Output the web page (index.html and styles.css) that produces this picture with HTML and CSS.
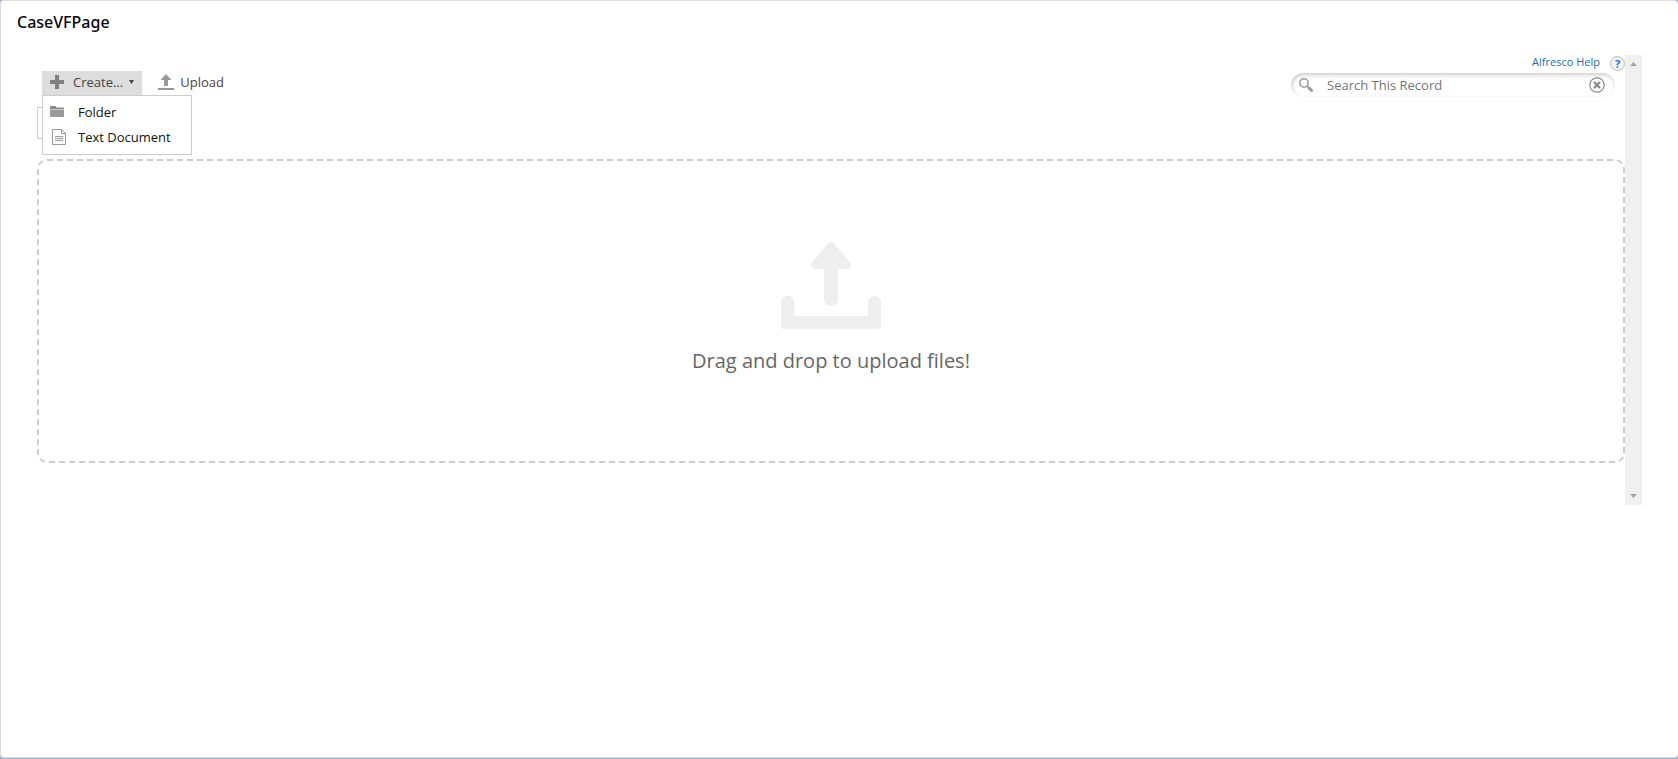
FILE: index.html
```html
<!DOCTYPE html>
<html lang="en">
<head>
<meta charset="utf-8">
<title>CaseVFPage</title>
<link rel="stylesheet" href="styles.css">
</head>
<body>
<article class="card">
  <h1 class="card-title">CaseVFPage</h1>
  <div class="frame">
    <main class="content">
      <header class="toolbar">
        <div class="actions">
          <div class="create">
            <button class="action action-open" type="button" aria-expanded="true">
              <svg width="14" height="14" viewBox="0 0 14 14" aria-hidden="true"><path d="M5 0h4v5h5v4H9v5H5V9H0V5h5z" fill="#808080"/></svg>
              <span class="create-label">Create...</span>
              <svg class="caret" width="5" height="4" viewBox="0 0 5 4" aria-hidden="true"><path d="M0 0h5L2.500 4z" fill="#444"/></svg>
            </button>
            <div class="menu" role="menu">
              <button class="menu-item" type="button" role="menuitem">
                <svg width="16" height="16" viewBox="0 0 16 16" aria-hidden="true"><path d="M0 3q0-1 1-1h4.500l1 1.500H13q1 0 1 1V5H0z" fill="#888"/><path d="M0 5.500h14V12q0 1-1 1H1q-1 0-1-1z" fill="#999"/></svg>
                Folder
              </button>
              <button class="menu-item" type="button" role="menuitem">
                <svg width="16" height="16" viewBox="0 0 16 16" aria-hidden="true"><path d="M2.500.5h9l4 4v11h-13zM11.500.5v4h4M5 7.500h8M5 9.500h8M5 11.500h8" fill="none" stroke="#999"/></svg>
                Text Document
              </button>
            </div>
          </div>
          <button class="action" type="button">
            <svg width="16" height="16" viewBox="0 0 16 16" aria-hidden="true"><path d="M8 0l5.500 6H10v6H6V6H2.500zM0 14h16v2H0z" fill="#999"/></svg>
            Upload
          </button>
        </div>
        <div class="tools">
          <div class="help">
            <a class="help-link" href="#help">Alfresco Help</a>
            <a class="help-icon" href="#help" aria-label="Help">?</a>
          </div>
          <form class="search">
            <svg width="14" height="14" viewBox="0 0 14 14" aria-hidden="true"><circle cx="5" cy="5" r="4.200" fill="none" stroke="#999" stroke-width="1.500"/><path d="M8 8l2 2" stroke="#999" stroke-width="1.500"/><path d="M10 10l2.500 2.500" stroke="#999" stroke-width="3" stroke-linecap="round"/></svg>
            <input class="search-input" type="text" aria-label="Search This Record" placeholder="Search This Record">
            <button class="clear" type="reset" aria-label="Clear search">
              <svg width="16" height="16" viewBox="0 0 16 16" aria-hidden="true"><circle cx="8" cy="8" r="7.200" fill="none" stroke="#888" stroke-width="1.200"/><path d="M5 5l6 6M11 5l-6 6" stroke="#888" stroke-width="2.200"/></svg>
            </button>
          </form>
        </div>
      </header>
      <div class="path"></div>
      <section class="dropzone">
        <svg width="100" height="87" viewBox="0 0 100 87" aria-hidden="true"><path d="M46.500 2Q50-1.500 53.500 2L69 20.500Q72 25 67 27H57V57a7 7 0 0 1-14 0V27H33Q28 25 31 20.500zM0 60.500a6.700 6.700 0 0 1 13.400 0V74H87V60.500a6.500 6.500 0 0 1 13 0V83q0 4-4 4H4q-4 0-4-4z" fill="#eee"/></svg>
        <p class="drop-text">Drag and drop to upload files!</p>
      </section>
    </main>
    <div class="scrollbar" aria-hidden="true">
      <svg width="7" height="4" viewBox="0 0 7 4"><path d="M0 4L3.500 0 7 4z" fill="#a3a3a3"/></svg>
      <svg width="7" height="4" viewBox="0 0 7 4"><path d="M0 0h7L3.500 4z" fill="#a3a3a3"/></svg>
    </div>
  </div>
</article>
</body>
</html>
```
FILE: styles.css
```css
* {
  box-sizing: border-box;
}

body {
  margin: 0;
  min-height: 100vh;
  display: flex;
  padding-bottom: 1px;
  background: #9fb0d3;
  font-family: "Open Sans", sans-serif;
  font-size: 13px;
  color: #444;
}

button {
  font: inherit;
  color: inherit;
  border: 0;
  background: none;
  cursor: pointer;
}

svg {
  flex: none;
  display: block;
}

.card {
  flex: 1;
  border: 1px solid #dcdcdc;
  border-right: 0;
  border-radius: 4px;
  background: #fff;
}

.card-title {
  margin: 0;
  padding: 9px 16px 11px;
  font-family: "Noto Sans", sans-serif;
  font-size: 16px;
  font-weight: 500;
  line-height: 24px;
  color: #080707;
}

.frame {
  display: flex;
  height: 450px;
  margin: 10px 36px 0;
}

.content {
  flex: 1;
}

.toolbar {
  display: flex;
  justify-content: space-between;
  height: 52px;
}

.actions {
  display: flex;
  align-items: flex-start;
  gap: 8px;
  padding: 16px 0 0 5px;
}

.create {
  position: relative;
}

.action {
  display: flex;
  align-items: center;
  gap: 6px;
  height: 24px;
  padding: 0 8px 2px;
}

.action-open {
  background: #ddd;
}

.create-label {
  margin-left: 3px;
}

.menu {
  position: absolute;
  top: 24px;
  left: 0;
  width: 150px;
  padding: 3px 0 5px;
  border: 1px solid #ccc;
  background: #fff;
  color: #111;
}

.menu-item {
  display: flex;
  align-items: center;
  gap: 12px;
  width: 100%;
  height: 25px;
  padding: 0 7px;
}

.tools {
  display: flex;
  flex-direction: column;
  align-items: flex-end;
  gap: 2px;
}

.help {
  display: flex;
  align-items: center;
  gap: 10px;
  height: 16px;
}

.help-link {
  padding-bottom: 2px;
  font-size: 11px;
  line-height: 14px;
  color: #1a6fb5;
  text-decoration: none;
}

.help-icon {
  width: 15px;
  height: 15px;
  border: 1px solid #bbb;
  border-radius: 50%;
  background: #f0f2f6;
  font-size: 11px;
  font-weight: 700;
  line-height: 13px;
  text-align: center;
  color: #1a73e8;
  text-decoration: none;
}

.search {
  display: flex;
  align-items: center;
  width: 324px;
  height: 24px;
  margin-right: 10px;
  padding: 0 10px 0 8px;
  border-radius: 12px;
  box-shadow: inset 1px 2px 4px #ccc;
}

.search-input {
  flex: 1;
  min-width: 0;
  padding: 0 14px;
  border: 0;
  outline: 0;
  background: none;
  font: inherit;
  color: #666;
}

.search-input::placeholder {
  color: #757575;
}

.clear {
  padding: 0;
}

.path {
  width: 150px;
  height: 32px;
  margin-bottom: 20px;
  border: 1px solid #ccc;
}

.dropzone {
  display: flex;
  flex-direction: column;
  align-items: center;
  height: 304px;
  padding-top: 81px;
  border: 2px dashed #ccc;
  border-radius: 10px;
}

.drop-text {
  margin: 18px 0 0;
  font-size: 20px;
  line-height: 28px;
  color: #666;
}

.scrollbar {
  display: flex;
  flex-direction: column;
  justify-content: space-between;
  align-items: center;
  width: 17px;
  padding: 7px 0;
  background: #f0f0f0;
}
```
